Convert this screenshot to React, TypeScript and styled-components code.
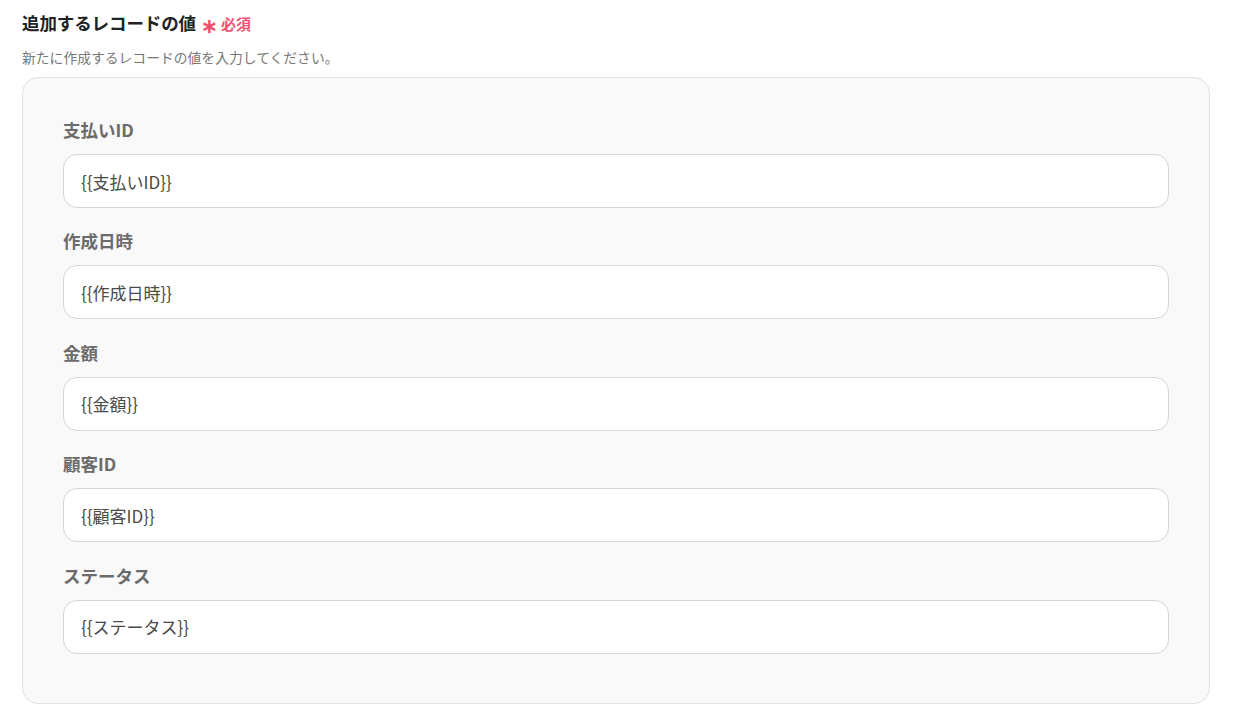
import styled, { createGlobalStyle } from 'styled-components';

const GlobalStyle = createGlobalStyle`
  body {
    margin: 0;
    background: #fff;
    font-family: "Noto Sans CJK JP", "Noto Sans", sans-serif;
  }
`;

const fields = [
  { label: '支払いID', value: '{{支払いID}}' },
  { label: '作成日時', value: '{{作成日時}}' },
  { label: '金額', value: '{{金額}}' },
  { label: '顧客ID', value: '{{顧客ID}}' },
  { label: 'ステータス', value: '{{ステータス}}' },
];

const App = () => (
  <Page>
    <GlobalStyle />
    <Header>
      <Title>追加するレコードの値</Title>
      <Asterisk>∗</Asterisk>
      <Required>必須</Required>
    </Header>
    <Description>新たに作成するレコードの値を入力してください。</Description>
    <Panel>
      {fields.map((f) => (
        <Field key={f.label}>
          <Label>{f.label}</Label>
          <TextInput defaultValue={f.value} />
        </Field>
      ))}
    </Panel>
  </Page>
);

const Page = styled.div`
  padding: 9px 34px 0 22px;
`;

const Header = styled.div`
  display: flex;
  align-items: baseline;
  height: 26px;
`;

const Title = styled.h2`
  margin: 0;
  font-size: 17.5px;
  font-weight: 700;
  line-height: 26px;
  letter-spacing: -0.1px;
  color: #222;
`;

const Asterisk = styled.span`
  margin-left: 5px;
  font-size: 20px;
  font-weight: 700;
  color: #f0506e;
  line-height: 26px;
  position: relative;
  top: 3px;
`;

const Required = styled.span`
  margin-left: 3px;
  font-size: 15px;
  font-weight: 700;
  color: #f0506e;
`;

const Description = styled.p`
  margin: 12px 0 0;
  font-size: 13.8px;
  line-height: 20px;
  color: #777;
`;

const Panel = styled.div`
  margin-top: 10px;
  box-sizing: border-box;
  width: 1188px;
  padding: 40px 40px 49px 40px;
  background: #f9f9f9;
  border: 1px solid #e2e2e2;
  border-radius: 16px;
  display: flex;
  flex-direction: column;
  gap: 21.4px;
`;

const Field = styled.div`
  display: flex;
  flex-direction: column;
  gap: 12px;
`;

const Label = styled.label`
  font-size: 17.5px;
  font-weight: 700;
  line-height: 24px;
  color: #6b6b6b;
`;

const TextInput = styled.input`
  box-sizing: border-box;
  width: 100%;
  height: 54px;
  padding: 0 17px;
  background: #fff;
  border: 1px solid #d3d5dc;
  border-radius: 14px;
  font-family: "Noto Sans CJK JP", "Noto Sans", sans-serif;
  font-size: 17px;
  color: #4a4a4a;
  outline: none;
`;

export default App;
